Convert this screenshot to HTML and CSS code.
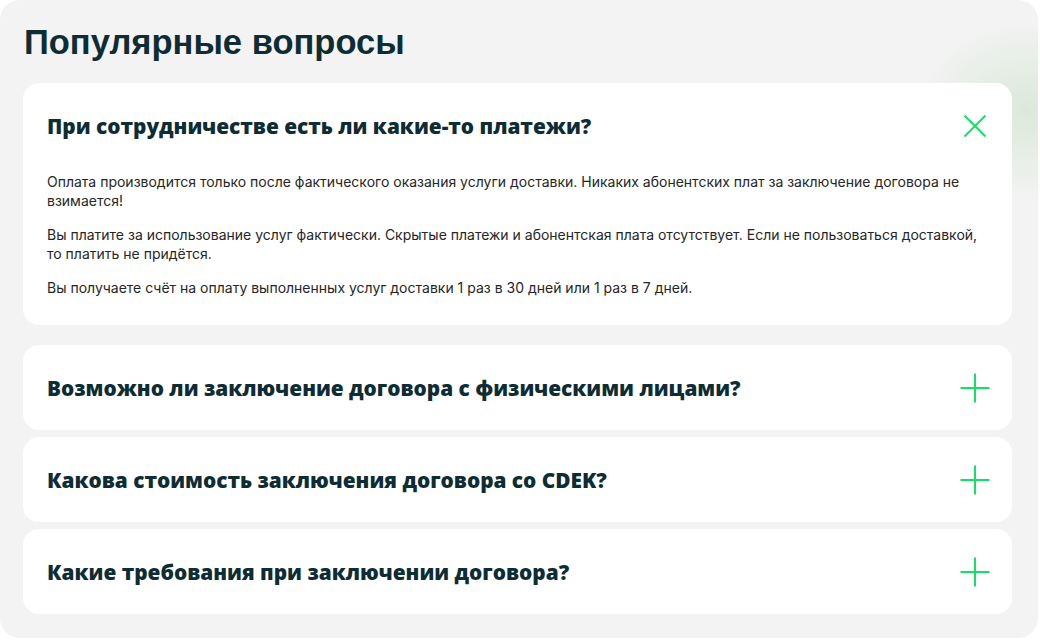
FILE: index.html
```html
<!DOCTYPE html>
<html lang="ru">
<head>
  <meta charset="UTF-8">
  <meta name="viewport" content="width=device-width, initial-scale=1">
  <title>Популярные вопросы</title>
  <link rel="stylesheet" href="styles.css">
</head>
<body>

  <section class="faq">
    <h2 class="faq-title">Популярные вопросы</h2>

    <div class="faq-list">
      <div class="faq-item open">
        <div class="faq-head">
          <h3>При сотрудничестве есть ли какие-то платежи?</h3>
          <button class="faq-toggle" aria-label="Свернуть">
            <svg width="30" height="30" viewBox="0 0 30 30" fill="none" stroke="currentcolor" stroke-width="2">
              <path d="M4.5 4.5 25.5 25.5" />
              <path d="M25.5 4.5 4.5 25.5" />
            </svg>
          </button>
        </div>
        <div class="faq-body">
          <p>Оплата производится только после фактического оказания услуги доставки. Никаких абонентских плат за заключение договора не взимается!</p>
          <p>Вы платите за использование услуг фактически. Скрытые платежи и абонентская плата отсутствует. Если не пользоваться доставкой, то платить не придётся.</p>
          <p>Вы получаете счёт на оплату выполненных услуг доставки 1 раз в 30 дней или 1 раз в 7 дней.</p>
        </div>
      </div>

      <div class="faq-item">
        <div class="faq-head">
          <h3>Возможно ли заключение договора с физическими лицами?</h3>
          <button class="faq-toggle" aria-label="Развернуть">
            <svg width="30" height="30" viewBox="0 0 30 30" fill="none" stroke="currentcolor" stroke-width="2">
              <path d="M0.5 15h29" />
              <path d="M15 0.5v29" />
            </svg>
          </button>
        </div>
      </div>

      <div class="faq-item">
        <div class="faq-head">
          <h3>Какова стоимость заключения договора со CDEK?</h3>
          <button class="faq-toggle" aria-label="Развернуть">
            <svg width="30" height="30" viewBox="0 0 30 30" fill="none" stroke="currentcolor" stroke-width="2">
              <path d="M0.5 15h29" />
              <path d="M15 0.5v29" />
            </svg>
          </button>
        </div>
      </div>

      <div class="faq-item">
        <div class="faq-head">
          <h3>Какие требования при заключении договора?</h3>
          <button class="faq-toggle" aria-label="Развернуть">
            <svg width="30" height="30" viewBox="0 0 30 30" fill="none" stroke="currentcolor" stroke-width="2">
              <path d="M0.5 15h29" />
              <path d="M15 0.5v29" />
            </svg>
          </button>
        </div>
      </div>
    </div>
  </section>

</body>
</html>
```
FILE: styles.css
```css
body {
  font-family: "Inter", "Noto Sans", sans-serif;
  background: #fff;
  margin: 0;
  padding: 0;
}

.faq {
  box-sizing: border-box;
  width: 1038px;
  height: 638px;
  padding: 22px 26px 0 23px;
  border-radius: 20px;
  background:
    radial-gradient(ellipse 110px 90px at 1025px 110px, rgba(208, 228, 208, 0.7), rgba(208, 228, 208, 0) 100%),
    #f3f3f3;
}

.faq-title {
  margin: 0 0 21px 1px;
  font-family: "Liberation Sans", Arial, sans-serif;
  font-size: 34.5px;
  line-height: 40px;
  font-weight: 700;
  color: #0e2c33;
}

.faq-list {
  display: flex;
  flex-direction: column;
  gap: 7px;
}

.faq-item {
  background: #fff;
  border-radius: 16px;
  padding: 28px 22px 27px 24px;
}

.faq-item.open {
  margin-bottom: 13px;
  padding-bottom: 28px;
}

.faq-head {
  display: flex;
  align-items: center;
  justify-content: space-between;
}

.faq-head h3 {
  margin: 0;
  font-family: "Open Sans", sans-serif;
  font-weight: 800;
  font-size: 20.8px;
  line-height: 28px;
  color: #0e2c33;
}

.faq-toggle {
  display: flex;
  padding: 0;
  border: none;
  background: none;
  color: #14e066;
  cursor: pointer;
}

.faq-body {
  margin-top: 31px;
  padding-right: 10px;
}

.faq-body p {
  margin: 0 0 15px;
  font-size: 14px;
  line-height: 19px;
  color: #262626;
}

.faq-body p:last-child {
  margin-bottom: 0;
}
```
